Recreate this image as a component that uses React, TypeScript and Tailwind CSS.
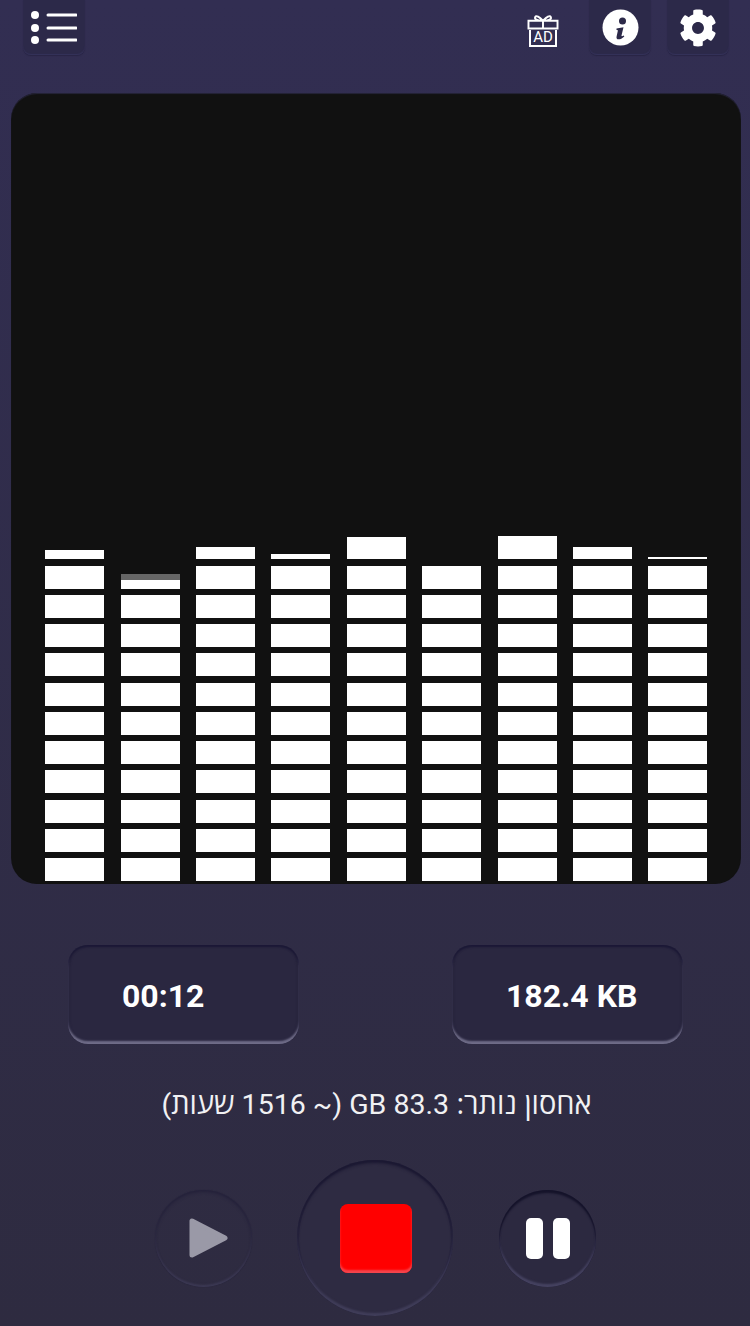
import { FaCog } from "react-icons/fa";

// Level meter: height of the partial top cell per channel, with an optional fading tip.
const channels = [
  { cap: 9 },
  { cap: 0, dim: true },
  { cap: 12 },
  { cap: 5 },
  { cap: 22 },
  { cap: 0 },
  { cap: 23 },
  { cap: 12 },
  { cap: 2 },
];

const rows = Array.from({ length: 11 }, (_, i) => i);

function Channel({ cap, dim }: { cap: number; dim?: boolean }) {
  return (
    <div className="flex w-[59px] flex-col gap-[6.25px]">
      {cap > 0 && <div className="bg-white" style={{ height: cap }} />}
      {rows.map((r) =>
        r === 0 && dim ? (
          <div key={r} className="mt-[8px] flex h-[15px] flex-col">
            <div className="h-[6px] bg-[#666666]" />
            <div className="h-[9px] bg-white" />
          </div>
        ) : (
          <div key={r} className="h-[23px] bg-white" />
        ),
      )}
    </div>
  );
}

function HeaderButton({ children }: { children: React.ReactNode }) {
  return (
    <button className="flex h-[55px] w-[62px] items-center justify-center rounded-b-[8px] bg-[#2c2949] shadow-[0_1px_1px_#282545,inset_0_-1px_1px_#35325a]">
      {children}
    </button>
  );
}

function StatBox({ value }: { value: string }) {
  return (
    <div className="flex h-[99px] w-[231px] items-center rounded-[20px] bg-[#2a2740] pl-[54px] pt-[2px] text-[32px] font-bold text-white shadow-[inset_0_2px_2px_#1b1836,inset_0_-3px_2px_#6f6c88,inset_2px_0_2px_#25223a,inset_-2px_0_2px_#25223a]">
      {value}
    </div>
  );
}

export default function App() {
  return (
    <div
      dir="ltr"
      className="flex h-[1326px] w-[750px] flex-col overflow-hidden bg-gradient-to-b from-[#322e52] to-[#2e2b40] font-['Roboto','Open_Sans',sans-serif]"
    >
      <header className="flex h-[55px] items-start pl-[23px] pr-[21px]">
        <HeaderButton>
          <svg width="46" height="34" viewBox="0 0 46 34" fill="none">
            <circle cx="4" cy="4" r="4" fill="#fff" />
            <circle cx="4" cy="17" r="4" fill="#fff" />
            <circle cx="4" cy="29" r="4" fill="#fff" />
            <path d="M17 4h28M17 17h28M17 29h28" stroke="#fff" strokeWidth="3" strokeLinecap="round" />
          </svg>
        </HeaderButton>
        <div className="ml-auto mr-[30px] mt-[15px] flex h-[32px] w-[32px] flex-col items-center">
          <svg width="32" height="15" viewBox="0 0 32 15" fill="none" stroke="#fff" strokeWidth="2">
            <path d="M1 6h30v8H1zM16 6C12 2 9 0 8 2s1 4 8 4ZM16 6C20 2 23 0 24 2s-1 4-8 4ZM16 6v8" />
          </svg>
          <div className="flex h-[18px] w-[28px] items-center justify-center border-2 border-t-0 border-white text-[15px] leading-none text-white">
            AD
          </div>
        </div>
        <HeaderButton>
          <svg width="37" height="37" viewBox="0 0 37 37">
            <circle cx="18.500" cy="18.500" r="18" fill="#fff" />
            <circle cx="20.500" cy="12" r="3.500" fill="#2c2949" />
            <path
              d="M14.500 19.500 21.500 18.300l-2 8.200c-.2 1 .5 1.200 2.300.1l.5.9c-2.300 2.300-4.300 2.900-5.800 2.800-1.800-.1-2.300-1.300-1.900-2.900l1.200-5.300c.2-1-.3-1.300-1.300-1.200z"
              fill="#2c2949"
            />
          </svg>
        </HeaderButton>
        <div className="ml-[16px]">
          <HeaderButton>
            <FaCog className="text-white" size={38} />
          </HeaderButton>
        </div>
      </header>

      <main className="mx-[11px] mt-[38px] flex h-[791px] w-[730px] items-end justify-between rounded-[26px] bg-[#111111] pb-[3px] pl-[34.300px] pr-[33.700px] shadow-[inset_0_1px_1px_#26253a]">
        {channels.map((c, i) => (
          <Channel key={i} cap={c.cap} dim={c.dim} />
        ))}
      </main>

      <section className="mt-[61px] flex justify-between pl-[68px] pr-[67px]">
        <StatBox value="00:12" />
        <StatBox value="182.4 KB" />
      </section>

      <p dir="rtl" className="mt-[42px] h-[34px] pl-[3px] text-center text-[28.500px] leading-[34px] text-[#f1f1f3]">
        <span className="font-['Open_Sans'] text-[29px]">אחסון נותר: </span>83.3 GB (~ 1516 <span className="font-['Open_Sans'] text-[29px]">שעות</span>)
      </p>

      <section className="mt-[40px] flex items-center pl-[155px]">
        <button className="flex h-[97px] w-[97px] items-center justify-center rounded-full shadow-[inset_0_2px_3px_#24213a,inset_0_-2px_2px_#3d3a55,0_0_1px_#25223a]">
          <svg width="40" height="44" viewBox="0 0 40 44" className="ml-[11px]">
            <path d="M3 5v34l33-17z" fill="#9a99a7" stroke="#9a99a7" strokeWidth="5" strokeLinejoin="round" />
          </svg>
        </button>
        <button className="ml-[45px] flex h-[156px] w-[156px] items-center justify-center rounded-full bg-[#2e2b42] shadow-[inset_0_3px_3px_#1b1832,inset_0_-3px_2px_#413e5a,inset_0_0_0_2px_#26233c]">
          <div className="ml-[1px] h-[69px] w-[72px] rounded-[8px] bg-[#ff0000] shadow-[inset_0_-3px_2px_#f4444c]" />
        </button>
        <button className="ml-[46px] flex h-[97px] w-[97px] items-center justify-center gap-[10px] rounded-full bg-[#2c2940] shadow-[inset_0_3px_2px_#15132a,inset_0_-3px_2px_#454260,inset_0_0_0_1px_#211e36]">
          <span className="h-[41px] w-[17px] rounded-[5px] bg-white" />
          <span className="h-[41px] w-[17px] rounded-[5px] bg-white" />
        </button>
      </section>
    </div>
  );
}
